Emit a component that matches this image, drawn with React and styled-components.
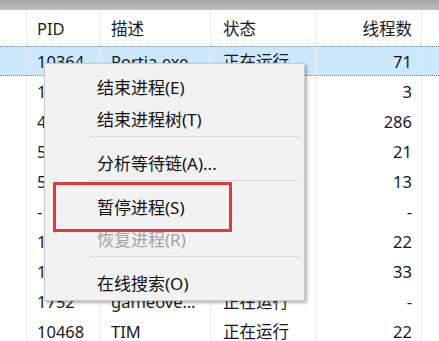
import React from "react";
import styled, { createGlobalStyle } from "styled-components";

const GlobalStyle = createGlobalStyle`
  html, body {
    margin: 0;
    padding: 0;
    background: #ffffff;
    overflow: hidden;
  }
  body {
    font-family: "Noto Sans", "Noto Sans CJK SC", sans-serif;
  }
`;

const Screen = styled.div`
  position: relative;
  width: 439px;
  height: 341px;
  overflow: hidden;
  background: #ffffff;
`;

const TitleStrip = styled.div`
  height: 10px;
  background: linear-gradient(#a4a4a4, #bebebe);
`;

const Table = styled.div`
  display: grid;
  grid-template-columns: 26px 74px 110px 106px 105px 1fr;
`;

const Row = styled.div`
  display: contents;
`;

const Cell = styled.div`
  height: ${(p) => (p.$head ? "36px" : "30px")};
  box-sizing: border-box;
  display: flex;
  align-items: center;
  justify-content: ${(p) => (p.$right ? "flex-end" : "flex-start")};
  padding: 0 9px 0 ${(p) => p.$pad || "0"};
  border-left: ${(p) => (p.$first ? "none" : "1px solid #ececec")};
  background: ${(p) => (p.$selected ? "#cce8ff" : "transparent")};
  border-top: ${(p) => (p.$selected ? "1px dotted #6f8fa8" : "none")};
  border-bottom: ${(p) => (p.$selected ? "1px dotted #6f8fa8" : "none")};
  font-size: 16.5px;
  color: #1a1a1a;
  white-space: nowrap;
  overflow: hidden;
`;

const Menu = styled.div`
  position: absolute;
  left: 44px;
  top: 63px;
  width: 261px;
  box-sizing: border-box;
  padding: 6px 0 2px;
  background: #f2f2f2;
  border: 1px solid #cccccc;
  box-shadow: 2px 2px 3px rgba(0, 0, 0, 0.3);
`;

const MenuItem = styled.div`
  height: 32px;
  display: flex;
  align-items: center;
  padding-left: 52px;
  font-size: 17px;
  color: ${(p) => (p.$disabled ? "#a3a3a3" : "#111111")};
  white-space: nowrap;
`;

const Separator = styled.div`
  height: 1px;
  margin: 2px 4px 9px 45px;
  background: #d9d9d9;
`;

const Highlight = styled.div`
  position: absolute;
  left: 53px;
  top: 182px;
  width: 179px;
  height: 50px;
  box-sizing: border-box;
  border: 3px solid #e3393e;
`;

// rows 1-7 sit under the context menu, only the first PID digit peeks out
const rows = [
  ["10364", "Portia.exe", "正在运行", "71", true],
  ["1", "", "", "3"],
  ["4", "", "", "286"],
  ["5", "", "", "21"],
  ["5", "", "", "13"],
  ["-", "", "", "-"],
  ["1", "", "", "22"],
  ["1", "", "", "33"],
  ["1752", "gameove…", "正在运行", "-"],
  ["10468", "TIM", "正在运行", "22"],
];

const menuItems = [
  { label: "结束进程(E)" },
  { label: "结束进程树(T)", sep: true },
  { label: "分析等待链(A)...", sep: true },
  { label: "暂停进程(S)" },
  { label: "恢复进程(R)", disabled: true, sep: true },
  { label: "在线搜索(O)" },
];

export default function App() {
  return (
    <Screen>
      <GlobalStyle />
      <TitleStrip />
      <Table>
        <Row>
          <Cell $head $first />
          <Cell $head $pad="10px">PID</Cell>
          <Cell $head $pad="10px">描述</Cell>
          <Cell $head $pad="12px">状态</Cell>
          <Cell $head $right>线程数</Cell>
          <Cell $head />
        </Row>
        {rows.map(([pid, desc, status, threads, selected], i) => (
          <Row key={i}>
            <Cell $first $selected={selected} />
            <Cell $pad="10px" $selected={selected}>{pid}</Cell>
            <Cell $pad="10px" $selected={selected}>{desc}</Cell>
            <Cell $pad="12px" $selected={selected}>{status}</Cell>
            <Cell $right $selected={selected}>{threads}</Cell>
            <Cell $selected={selected} />
          </Row>
        ))}
      </Table>
      <Menu>
        {menuItems.map((item) => (
          <React.Fragment key={item.label}>
            <MenuItem $disabled={item.disabled}>{item.label}</MenuItem>
            {item.sep && <Separator />}
          </React.Fragment>
        ))}
      </Menu>
      <Highlight />
    </Screen>
  );
}
